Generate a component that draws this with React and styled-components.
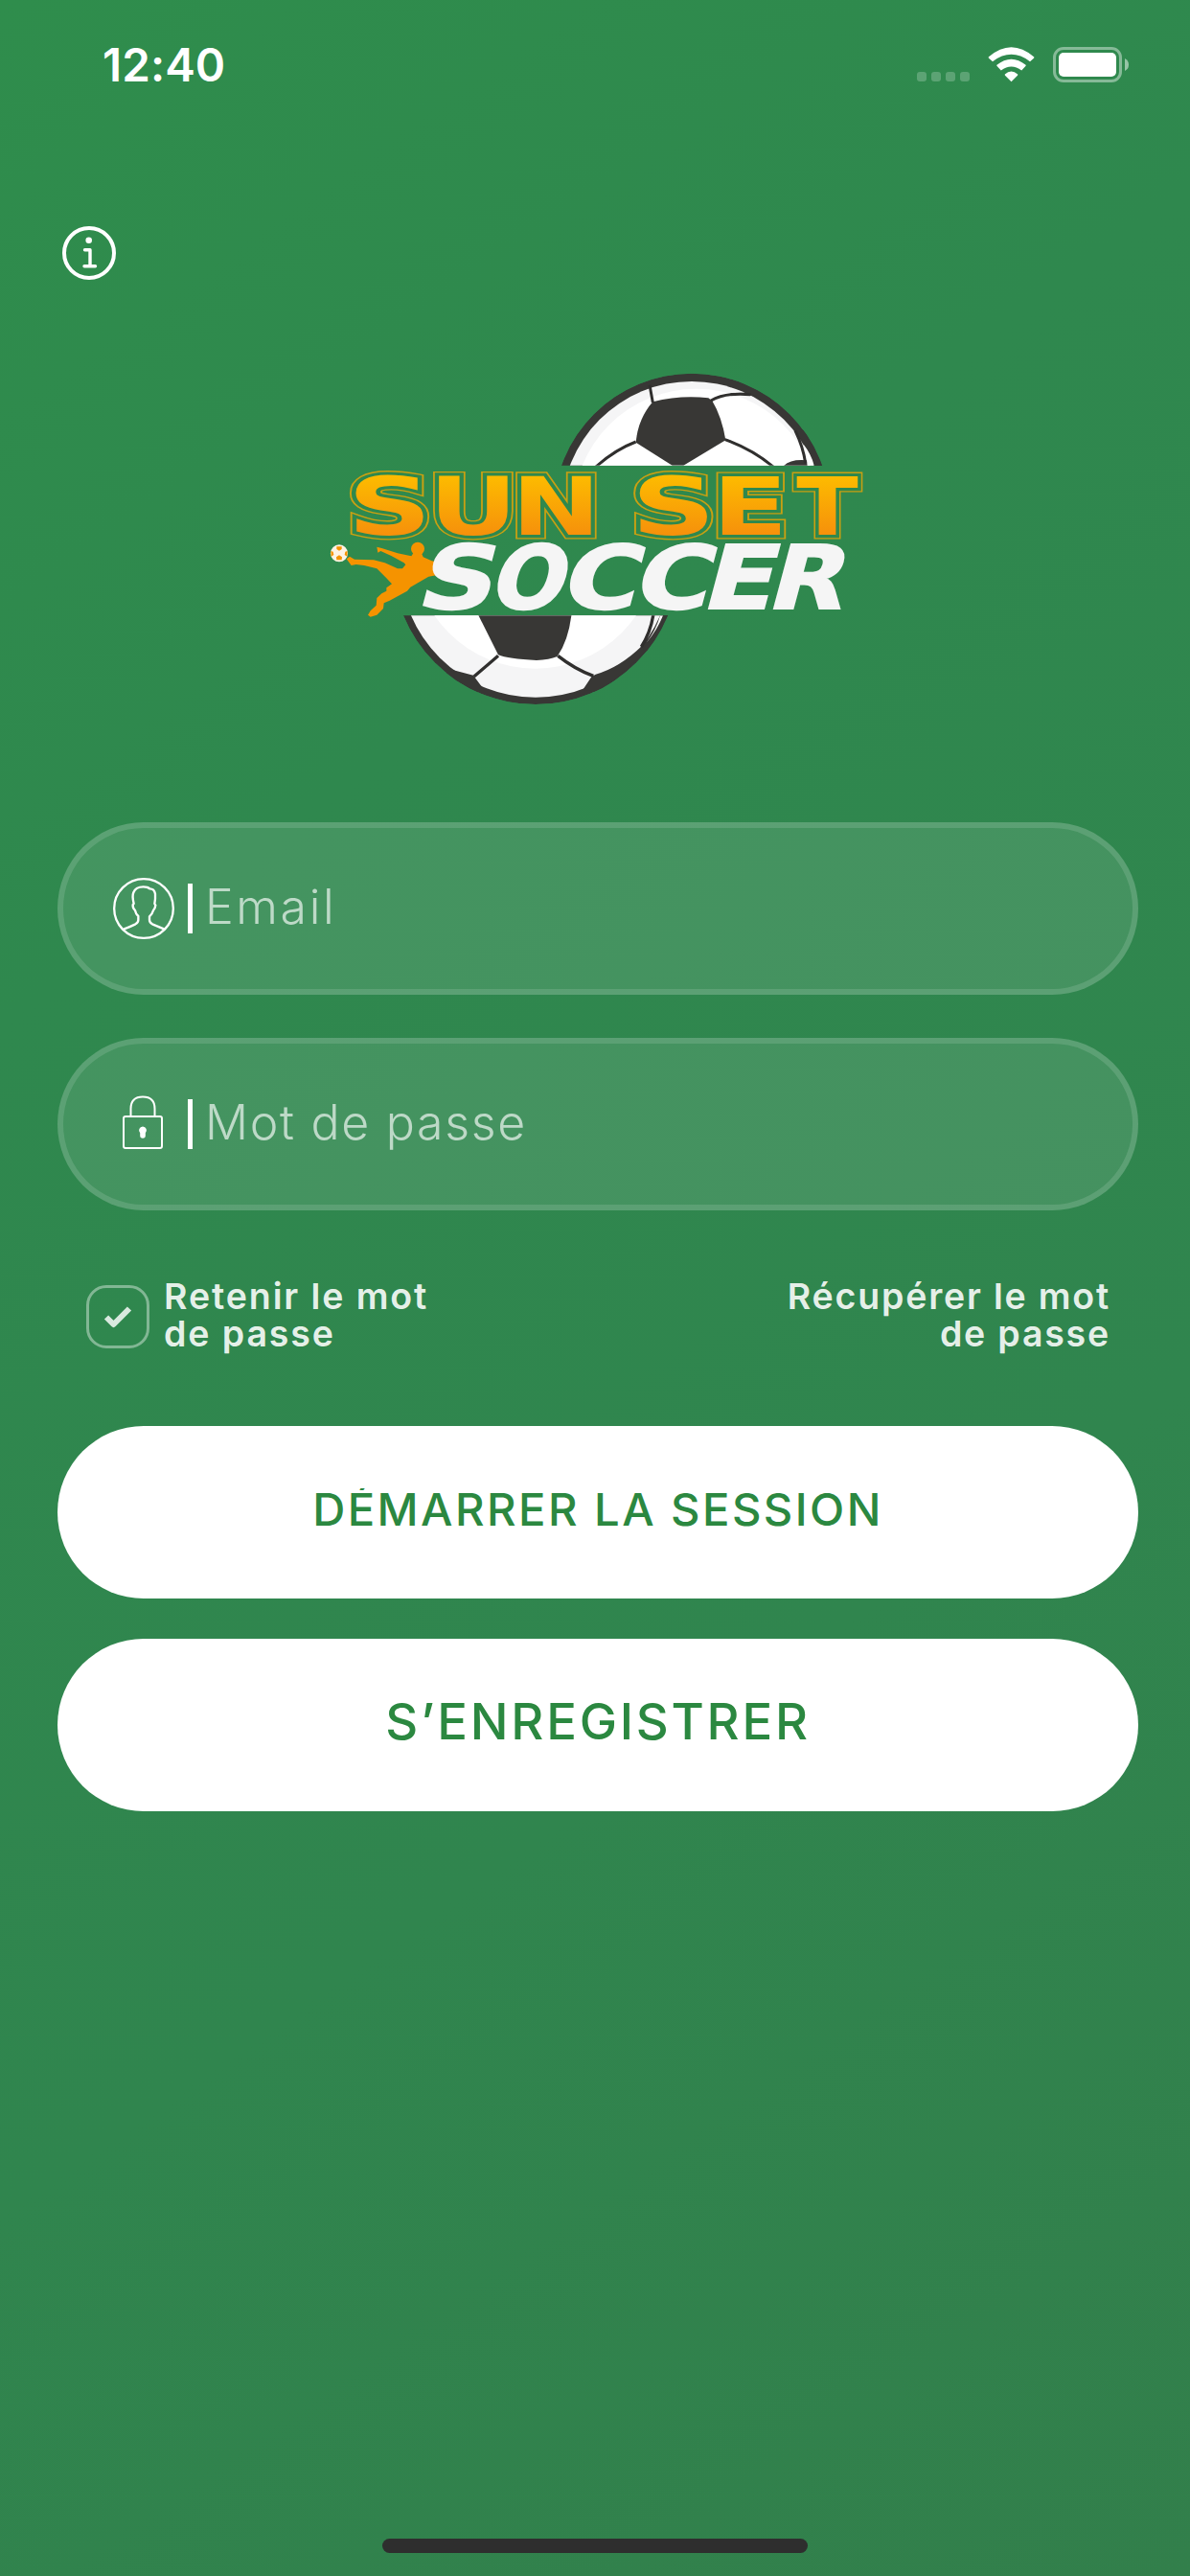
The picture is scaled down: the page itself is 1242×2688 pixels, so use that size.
import React, { useState } from 'react';
import styled, { createGlobalStyle } from 'styled-components';

const GlobalStyle = createGlobalStyle`
    * {
        box-sizing:border-box;
    }
    body {
        margin:0;
        font-family:Inter, "Liberation Sans", sans-serif;
    }
    button {
        font-family:inherit;
    }
`

// left and right edge of each glyph for a 100px font
const glyphInk = {
    S: [6.6, 66.2],
    U: [8.8, 72.4],
    N: [9.2, 74.5],
    E: [9.2, 63.8],
    T: [0.5, 67.8],
    O: [5, 80],
    C: [5, 67.1],
    R: [9.2, 77.8],
};

const sunSet = [
    ['S', 370.7, 443.3],
    ['U', 457.7, 530],
    ['N', 544.3, 616.7],
    ['S', 667, 739.7],
    ['E', 754, 817.3],
    ['T', 831.7, 895.3],
];

const soccer = [
    ['S', 440, 506],
    ['O', 513, 581],
    ['C', 588.5, 656],
    ['C', 664, 731],
    ['E', 740, 800],
    ['R', 808, 879],
];

const fitLetter = ([letter, left, right], capHeight) => {
    const [inkLeft, inkRight] = glyphInk[letter];
    const scaleX = (right - left) / (inkRight - inkLeft);
    return {
        letter,
        shift: left - inkLeft * scaleX,
        transform: `scale(${scaleX} ${capHeight / 72.9})`,
    };
}

const LetterRow = ({ letters, capHeight, baseline, ...rest }) => (
    <g {...rest}>
        {letters.map((item, index) => {
            const { letter, shift, transform } = fitLetter(item, capHeight);
            return (
                <text key={index} transform={`translate(${shift} ${baseline}) ${transform}`}>{letter}</text>
            )
        })}
    </g>
)

const Logo = () => (
    <LogoSvg viewBox='340 385 570 355'>
        <defs>
            <linearGradient id='sunset' gradientUnits='userSpaceOnUse' x1='0' y1='-73' x2='0' y2='0'>
                <stop offset='0' stopColor='#fdbb00' />
                <stop offset='1' stopColor='#f6910b' />
            </linearGradient>
            <clipPath id='topHalf'><rect x='-200' y='0' width='1100' height='347' /></clipPath>
            <clipPath id='bottomHalf'><rect x='200' y='817' width='1000' height='400' /></clipPath>
            <clipPath id='topBall'><circle cx='306' cy='492' r='433' /></clipPath>
            <clipPath id='bottomBall'><circle cx='687' cy='648' r='447' /></clipPath>
        </defs>

        <g transform='translate(620 370) scale(.33333)'>
            <g clipPath='url(#topHalf)'>
                <g clipPath='url(#topBall)'>
                    <circle cx='306' cy='492' r='433' fill='#383735' />
                    <circle cx='306' cy='492' r='408' fill='#f5f5f6' />
                    <circle cx='320' cy='492' r='385' fill='#fff' />
                    <path fill='#383735' d='M184 148Q270 126 358 136L370 145Q400 195 412 268L280 347H245L131 275Q138 200 184 148Z' />
                    <path fill='#383735' d='M455 108Q490 118 510 132L490 128Q460 122 420 128L430 120L475 119ZM628 232L650 270Q680 305 692 355H740L690 240ZM592 350Q615 326 666 331L668 350Z' />
                    <path fill='none' stroke='#302f2e' strokeWidth='9' d='M174 95L184 150M366 144Q410 118 490 125M131 273Q65 298 5 352M410 266Q495 296 562 352M630 238Q655 290 662 340' />
                    <path fill='#fff' d='M655 280Q680 312 689 347H673Q666 310 655 280Z' />
                </g>
            </g>
        </g>

        <g transform='translate(330 370) scale(.33333)'>
            <g clipPath='url(#bottomHalf)'>
                <g clipPath='url(#bottomBall)'>
                    <circle cx='687' cy='648' r='447' fill='#383735' />
                    <circle cx='687' cy='648' r='425' fill='#f5f5f6' />
                    <circle cx='686' cy='600' r='383' fill='#fff' />
                    <path fill='#383735' d='M505 810L570 940Q600 953 690 957Q730 956 755 945Q790 895 800 810Z' />
                    <path fill='#383735' d='M430 988L492 1004L520 1042L505 1060L400 1000ZM862 1009L875 1001Q950 980 1020 912L1040 920L890 1060L836 1048Z' />
                    <path fill='none' stroke='#302f2e' strokeWidth='10' d='M570 943L494 1008M757 943Q810 985 868 1006M1056 812Q1047 870 1018 915' />
                    <path fill='#383735' d='M1082 812L1120 812L1040 930L1022 925Q1066 870 1082 812Z' />
                    <path fill='#fff' d='M1086 817H1077Q1064 864 1034 902Q1066 866 1086 817Z' />
                </g>
            </g>
        </g>

        <g fill='none' strokeLinejoin='miter' fontSize='100'>
            <LetterRow letters={sunSet} capHeight={61} baseline={557.7} stroke='#c9a012' strokeWidth='10.8' />
            <LetterRow letters={sunSet} capHeight={61} baseline={557.7} stroke='#2f884d' strokeWidth='7.6' />
            <LetterRow letters={sunSet} capHeight={61} baseline={557.7} fill='url(#sunset)' />
        </g>

        <g transform='translate(340 550) scale(.33333)' fill='#f59300'>
            <ellipse cx='288' cy='68' rx='21' ry='21' />
            <path d='M160 62L175 66L225 82L268 91L275 80L300 82L305 94L332 106L360 112L410 130L380 132L350 150L322 155L305 165L265 188L255 200L200 230L182 238L180 255L160 275L140 281L132 275L140 262L158 245L160 222L175 208L190 200L190 190L207 178L190 160L160 130L120 120L95 117L80 120L65 100L75 92L90 101L150 103L185 112L225 130L240 130L250 118L245 112L205 90L172 75L163 80Z' />
            <circle cx='42' cy='82' r='27' fill='#fdf3e4' />
            <path d='M34 61L50 61L50 69L42 74L34 69ZM34 103L50 103L51 94L42 88L33 94ZM16 75L23 77L25 87L17 92ZM68 75L61 77L59 87L67 92Z' />
        </g>

        <g transform='translate(0 635.2) skewX(-15)' fill='#f5f5f5' stroke='#f5f5f5' strokeWidth='2' fontSize='100'>
            <LetterRow letters={soccer} capHeight={67} baseline={0} />
        </g>
    </LogoSvg>
)

const StatusIcons = () => (
    <svg width='226' height='44' viewBox='953 45 226 44'>
        <g fill='#fff' fillOpacity='.22'>
            <rect x='957' y='75' width='10' height='10' rx='3' />
            <rect x='972' y='75' width='10' height='10' rx='3' />
            <rect x='987' y='75' width='10' height='10' rx='3' />
            <rect x='1002' y='75' width='10' height='10' rx='3' />
        </g>
        <g fill='#fff'>
            <path d='M1032 59.3Q1031.300 60 1032 60.700L1036 64.200Q1055.500 49.500 1075 64.200L1079 60.700Q1079.700 60 1079 59.300Q1055.500 39.300 1032 59.300Z' />
            <path d='M1040.400 67.800Q1040 68.500 1040.600 69L1044.800 73.500Q1055.500 65.300 1066.200 73.500L1070.400 69Q1071 68.500 1070.600 67.800Q1055.500 55.800 1040.400 67.800Z' />
            <path d='M1048.800 77.600Q1048.500 78.200 1049 78.700L1055.500 85.200L1062 78.700Q1062.500 78.200 1062.200 77.600Q1055.500 71.400 1048.800 77.600Z' />
            <rect x='1105' y='55' width='60' height='25' rx='5' />
        </g>
        <rect x='1100.500' y='50.500' width='69' height='34' rx='9.500' fill='none' stroke='#fff' strokeOpacity='.42' strokeWidth='3' />
        <path d='M1174 61Q1178 63 1178 67.500Q1178 72 1174 74Z' fill='#fff' fillOpacity='.5' />
    </svg>
)

const InfoIcon = () => (
    <svg width='56' height='56' viewBox='0 0 56 56' fill='none' stroke='#fff' strokeLinecap='round' strokeLinejoin='round'>
        <circle cx='28' cy='28' r='26' strokeWidth='4' />
        <circle cx='27.700' cy='14.700' r='3.300' fill='#fff' stroke='none' />
        <path strokeWidth='3.400' d='M23.500 24.700H29V41.500M23 41.700H34.500' />
    </svg>
)

const UserIcon = () => (
    <svg width='64' height='64' viewBox='24 48 192 192' fill='none' stroke='#fff' strokeWidth='7' strokeLinejoin='round'>
        <circle cx='120' cy='144' r='92.500' />
        <path d='M57 209Q80 200 94 193Q103 188 103 180V168Q95 161 93 150Q85 142 86 132L89 129Q83 105 88 94Q94 76 119 76Q133 76 139 82Q153 82 156 98Q157 113 154 129L157 134Q156 144 150 150Q147 161 138 169V180Q138 188 147 193L185 209' />
    </svg>
)

const LockIcon = () => (
    <svg width='44' height='60' viewBox='0 0 44 60' fill='none' stroke='#fff' strokeWidth='2'>
        <path d='M8.500 22V14Q8.500 1.500 21 1.500Q33.500 1.500 33.500 14V22' />
        <rect x='1' y='22' width='40' height='33' rx='2' />
        <path fill='#fff' stroke='none' d='M21 32.500A4 4 0 0 1 23.800 39.300V42A2.800 2.800 0 0 1 18.200 42V39.300A4 4 0 0 1 21 32.500Z' />
    </svg>
)

const Field = ({ icon, label, spacing }) => (
    <FieldWrapper>
        <FieldIcon>{icon}</FieldIcon>
        <Caret />
        <Placeholder $spacing={spacing}>{label}</Placeholder>
    </FieldWrapper>
)

const App = () => {
    const [remember, setRemember] = useState(true);

    const toggleRemember = () => {
        setRemember((remember) => !remember);
    }

    return (
        <Screen>
            <GlobalStyle />
            <StatusBar>
                <Clock>12:40</Clock>
                <StatusIcons />
            </StatusBar>
            <TopArea>
                <InfoIcon />
            </TopArea>
            <LogoArea>
                <Logo />
            </LogoArea>
            <LoginForm>
                <Field icon={<UserIcon />} label='Email' spacing={2.6} />
                <Field icon={<LockIcon />} label='Mot de passe' spacing={1.7} />
            </LoginForm>
            <OptionsRow>
                <Remember onClick={toggleRemember}>
                    <CheckBox>
                        {remember &&
                            <svg width='32' height='26' viewBox='0 0 32 26'>
                                <path d='M4 13.500L11.500 21L28 4.500' fill='none' stroke='#fff' strokeOpacity='.82' strokeWidth='6' strokeLinejoin='round' />
                            </svg>
                        }
                    </CheckBox>
                    <OptionText>Retenir le mot<br />de passe</OptionText>
                </Remember>
                <OptionText $right>Récupérer le mot<br />de passe</OptionText>
            </OptionsRow>
            <ButtonArea>
                <PillButton><ButtonLabel $size={47.2} $spacing={2.45} $clipped>DÉMARRER LA SESSION</ButtonLabel></PillButton>
                <PillButton><ButtonLabel $size={52.6} $spacing={2.75}>S’ENREGISTRER</ButtonLabel></PillButton>
            </ButtonArea>
            <HomeBar />
        </Screen>
    )
}

export default App;

const Screen = styled.div`
    display:flex;
    flex-direction:column;
    width:1242px;
    height:2688px;
    overflow:hidden;
    background:linear-gradient(145deg, #2f8d4c 0%, #2f884e 30%, #30854e 65%, #327f4b 100%);
`
const StatusBar = styled.div`
    display:flex;
    justify-content:space-between;
    height:132px;
    padding:45px 63px 0 107px;
`
const Clock = styled.div`
    height:46px;
    line-height:46px;
    font-size:47.5px;
    font-weight:600;
    letter-spacing:0.1px;
    color:white;
`
const TopArea = styled.div`
    height:253px;
    padding:104px 0 0 65px;
`
const LogoArea = styled.div`
    height:473px;
    padding-left:340px;
`
const LogoSvg = styled.svg`
    display:block;
    width:570px;
    height:355px;
    font-family:"DejaVu Sans", sans-serif;
    font-weight:bold;
`
const LoginForm = styled.div`
    display:flex;
    flex-direction:column;
    gap:45px;
    padding:0 54px 0 60px;
`
const FieldWrapper = styled.div`
    display:flex;
    align-items:center;
    height:180px;
    padding-left:47px;
    border:6px solid rgba(255,255,255,0.13);
    border-radius:90px;
    background:rgba(255,255,255,0.1);
`
const FieldIcon = styled.div`
    display:flex;
    justify-content:center;
    width:74px;
`
const Caret = styled.div`
    width:5px;
    height:52px;
    margin-left:9px;
    background:white;
`
const Placeholder = styled.span`
    margin-left:13px;
    padding-bottom:4px;
    font-size:50px;
    font-weight:330;
    line-height:60px;
    letter-spacing:${props => props.$spacing}px;
    color:rgba(255,255,255,0.65);
`
const OptionsRow = styled.div`
    display:flex;
    justify-content:space-between;
    height:225px;
    padding:70px 83px 0 90px;
`
const Remember = styled.div`
    display:flex;
    align-items:flex-start;
    gap:15px;
    cursor:pointer;
`
const CheckBox = styled.div`
    display:flex;
    justify-content:center;
    align-items:center;
    width:66px;
    height:66px;
    margin-top:8px;
    border:3px solid rgba(255,255,255,0.4);
    border-radius:21px;
`
const OptionText = styled.p`
    margin:0;
    font-size:37.5px;
    font-weight:560;
    line-height:39px;
    letter-spacing:${props => props.$right ? '1.8px' : '1.9px'};
    text-align:${props => props.$right ? 'right' : 'left'};
    color:rgba(255,255,255,0.9);
`
const ButtonArea = styled.div`
    display:flex;
    flex-direction:column;
    gap:42px;
    padding:0 54px 0 60px;
`
const PillButton = styled.button`
    display:flex;
    justify-content:center;
    align-items:center;
    height:180px;
    padding:0 0 7px;
    border:none;
    border-radius:90px;
    background:white;
`
const ButtonLabel = styled.span`
    overflow:${props => props.$clipped ? 'hidden' : 'visible'};
    font-size:${props => props.$size}px;
    font-weight:540;
    line-height:43px;
    letter-spacing:${props => props.$spacing}px;
    white-space:nowrap;
    color:#2b8840;
`
const HomeBar = styled.div`
    width:444px;
    height:15px;
    margin:auto auto 24px 399px;
    border-radius:8px;
    background:#2e2e2e;
`
